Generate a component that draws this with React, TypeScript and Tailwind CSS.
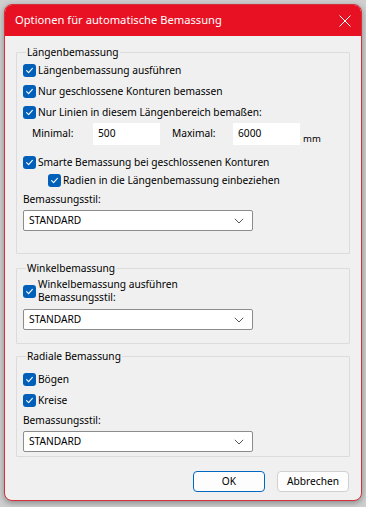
import React from 'react';

const font = { fontFamily: '"Noto Sans", "Open Sans", sans-serif' };

// Small blue Win11-style checkbox
const Check: React.FC<{ label?: React.ReactNode; className?: string }> = ({ label, className }) => (
  <div className={`flex items-center ${className ?? ''}`}>
    <span className="w-[13px] h-[13px] rounded-[3px] bg-[#005fb8] flex items-center justify-center shrink-0">
      <svg width="9" height="9" viewBox="0 0 9 9" fill="none">
        <path d="M1.6 4.7 L3.6 6.6 L7.4 2.4" stroke="white" strokeWidth="1.1" strokeLinecap="round" strokeLinejoin="round" />
      </svg>
    </span>
    {label && <span className="ml-[2px] leading-none">{label}</span>}
  </div>
);

const Select: React.FC = () => (
  <div className="w-[230px] h-[21px] bg-white border border-[#8c8c8c] rounded-[2px] flex items-center justify-between pl-[5px] pr-[8px]">
    <span>STANDARD</span>
    <svg width="10" height="6" viewBox="0 0 10 6" fill="none">
      <path d="M0.8 0.8 L5 5 L9.2 0.8" stroke="#555" strokeWidth="1" />
    </svg>
  </div>
);

const Group: React.FC<{ title: string; className?: string; children: React.ReactNode }> = ({ title, className, children }) => (
  <fieldset className={`border border-[#dcdcdc] rounded-[1px] w-[334px] px-[6px] ${className ?? ''}`}>
    <legend className="ml-[3px] px-[1px] h-[16px] leading-[16px]">{title}</legend>
    {children}
  </fieldset>
);

export default function App() {
  return (
    <div className="w-[366px] h-[507px] bg-[#cfcfcf] pt-[4px] pl-[4px] text-[10.2px] text-black" style={font}>
      <div className="w-[358px] h-[497px] rounded-[8px] border border-[#d4313d] bg-[#f0f0f0] overflow-hidden shadow-[0_2px_6px_rgba(0,0,0,0.35)] flex flex-col">
        <div className="h-[31px] bg-[#e81123] flex items-center justify-between pl-[10px] pr-[10px] shrink-0">
          <span className="text-white text-[11.2px]">Optionen für automatische Bemassung</span>
          <svg width="12" height="12" viewBox="0 0 12 12" fill="none">
            <path d="M0.5 0.5 L11.5 11.5 M11.5 0.5 L0.5 11.5" stroke="white" strokeWidth="1" />
          </svg>
        </div>

        <div className="px-[11px] pt-[8px] flex flex-col">
          <Group title="Längenbemassung" className="h-[210px]">
            <Check label="Längenbemassung ausführen" className="h-[21px]" />
            <Check label="Nur geschlossene Konturen bemassen" className="h-[21px]" />
            <Check label="Nur Linien in diesem Längenbereich bemaßen:" className="h-[21px]" />
            <div className="h-[22px] flex items-center">
              <span className="w-[70px] pl-[9px]">Minimal:</span>
              <div className="w-[67px] h-[22px] bg-white flex items-center pl-[5px]">500</div>
              <span className="w-[73px] pl-[12px]">Maximal:</span>
              <div className="w-[67px] h-[22px] bg-white flex items-center pl-[5px]">6000</div>
              <span className="ml-[3px] mt-[10px] text-[9.5px]">mm</span>
            </div>
            <Check label="Smarte Bemassung bei geschlossenen Konturen" className="h-[20px] mt-[7px]" />
            <Check label="Radien in die Längenbemassung einbeziehen" className="h-[17px] pl-[25px]" />
            <div className="h-[20px] mt-[1px] flex items-center">Bemassungsstil:</div>
            <Select />
          </Group>

          <Group title="Winkelbemassung" className="h-[84px] mt-[6px]">
            <div className="flex items-center h-[28px] mt-[1px]">
              <Check />
              <div className="ml-[2px] flex flex-col leading-[13px]">
                <span>Winkelbemassung ausführen</span>
                <span>Bemassungsstil:</span>
              </div>
            </div>
            <div className="mt-[4px]">
              <Select />
            </div>
          </Group>

          <Group title="Radiale Bemassung" className="h-[109px] mt-[4px]">
            <Check label="Bögen" className="h-[21px] mt-[5px]" />
            <Check label="Kreise" className="h-[21px]" />
            <div className="h-[20px] flex items-center">Bemassungsstil:</div>
            <Select />
          </Group>

          <div className="flex justify-end gap-[12px] mt-[14px] pr-[1px]">
            <button className="w-[72px] h-[21px] rounded-[4px] border border-[#0067c0] bg-[#fdfdfd] text-[10.2px]" style={font}>OK</button>
            <button className="w-[72px] h-[21px] rounded-[4px] border border-[#d0d0d0] bg-[#fdfdfd] text-[10.2px]" style={font}>Abbrechen</button>
          </div>
        </div>
      </div>
    </div>
  );
}
